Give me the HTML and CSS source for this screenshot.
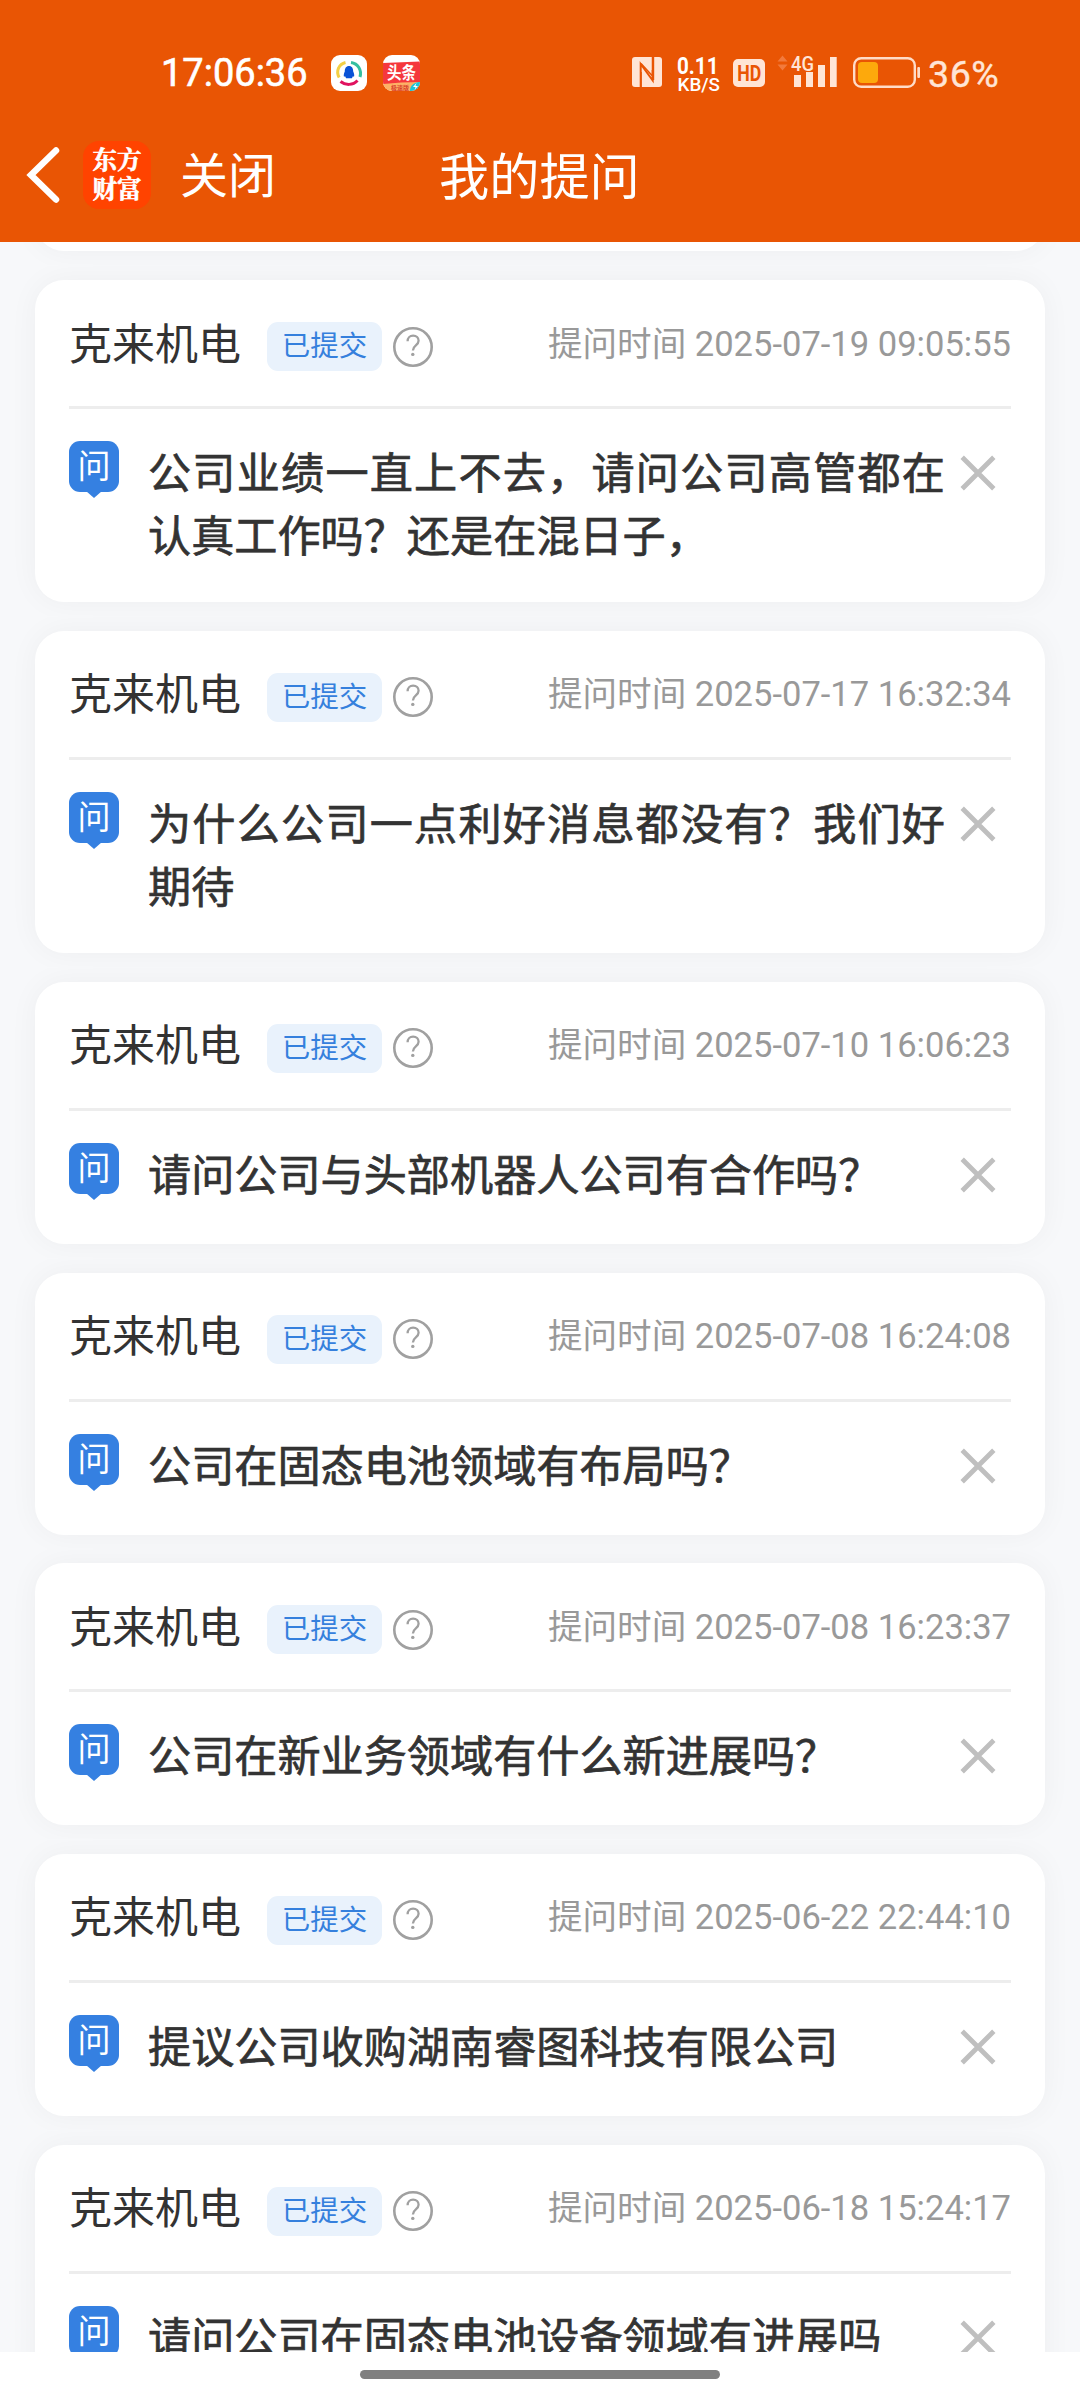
FILE: index.html
```html
<!DOCTYPE html>
<html lang="zh-CN">
<head>
<meta charset="utf-8">
<title>我的提问</title>
<link rel="stylesheet" href="styles.css">
</head>
<body>
<svg class="defs" aria-hidden="true">
  <symbol id="help" viewBox="0 0 42 42"><circle cx="21" cy="21" r="18.7" fill="none" stroke="#a0a0a0" stroke-width="2.6"/><path d="M15.6 15.300c0-3.400 2.200-5.600 5.500-5.600s5.500 2.100 5.500 5.100c0 4.600-5.700 4.600-5.700 9.600" fill="none" stroke="#a0a0a0" stroke-width="2.3"/><circle cx="20.8" cy="28.400" r="1.7" fill="#a0a0a0"/></symbol>
  <symbol id="close" viewBox="0 0 36 36"><path d="M2.2 2.2l31.6 31.6M33.8 2.2L2.2 33.8" fill="none" stroke="#bfbfbf" stroke-width="4.8"/></symbol>
</svg>
<header class="header">
  <div class="status">
    <span class="clock">17:06:36</span>
    <svg class="app" width="36" height="36" viewBox="0 0 36 36">
      <rect width="36" height="36" rx="9" fill="#fff"/>
      <g fill="none" stroke-width="3"><path d="M8.200 22.500C4.500 16 8 9 14.500 7.500" stroke="#f3cf45"/><path d="M20 7.500C27 8.500 31 15 29 22" stroke="#35bfa0"/><path d="M9.500 26.500C14.500 30.500 22 30.500 26.500 25.500" stroke="#e0125f"/></g>
      <path d="M18 11c3 0 4.200 2.400 4.200 5.500 1 2 1.300 4 .8 5.300l-1.100-.5-1 2h-5.800l-1-2-1.100.5c-.5-1.300-.2-3.300.8-5.300C13.800 13.400 15 11 18 11z" fill="#0a52d6"/>
    </svg>
    <svg class="app" width="37" height="36" viewBox="0 0 37 36">
      <clipPath id="newsclip"><rect width="37" height="36" rx="9"/></clipPath>
      <g clip-path="url(#newsclip)"><rect width="37" height="36" fill="#fff"/><path d="M0 8l37-1.500V29H0z" fill="#f5383d"/><path d="M0 29q18-2 37-2v9H0z" fill="#fdb266"/><path d="M27 36c0-6 4-8.500 10-9v9z" fill="#19c5dc"/><path d="M33.500 28l-3.500 4h2.500l-1 3 3.500-4h-2.500z" fill="#fff"/>
      <text class="news" x="4" y="24" textLength="29" lengthAdjust="spacingAndGlyphs">头条</text><text class="news-sub" x="17" y="34.500" text-anchor="middle">极速版</text></g>
    </svg>
    <svg class="signals" width="290" height="44" viewBox="630 51 290 44">
      <rect x="632" y="57" width="30" height="30" rx="3" fill="#ffe5d6"/>
      <path d="M640.700 87V64l12 16.500V70M653.200 57v23" fill="none" stroke="#e95504" stroke-width="2"/><path d="M641 63.500l11.500 12.500v-5l0-14M641 72v15" fill="none" stroke="#e95504" stroke-width="1.500"/>
      <text class="speed" x="677" y="73.500" textLength="41.500" lengthAdjust="spacingAndGlyphs">0.11</text>
      <text class="unit" x="677.500" y="91" textLength="42.500" lengthAdjust="spacingAndGlyphs">KB/S</text>
      <rect x="733" y="59" width="32" height="28" rx="5" fill="#ffe5d6"/>
      <text class="hd" x="749.200" y="81" text-anchor="middle" textLength="24" lengthAdjust="spacingAndGlyphs">HD</text>
      <path d="M777.500 61.500l5-6 5 6zM777.500 64.500l5 6 5-6z" fill="#f27a3c"/>
      <text class="net" x="791" y="70.500" textLength="23" lengthAdjust="spacingAndGlyphs">4G</text>
      <path d="M794 75h7v12h-7zM806 72h7v15h-7zM818 65h7v22h-7zM830 57h6.700v30h-6.700z" fill="#ffe5d6"/>
      <rect x="854.200" y="58.200" width="60.600" height="28.600" rx="7" fill="none" stroke="#ffdcc8" stroke-width="2.400"/>
      <rect x="858" y="62" width="20" height="21" rx="4" fill="#fda90c"/><rect x="917.300" y="67" width="2.700" height="11" rx="1" fill="#ffdcc8"/>
    </svg>
    <span class="percent">36%</span>
  </div>
  <nav class="nav">
    <svg class="back" width="34" height="60" viewBox="0 0 34 60"><path d="M30 5.500L5 30 30 54.500" fill="none" stroke="#fff" stroke-width="6.500" stroke-linecap="round" stroke-linejoin="miter"/></svg>
    <div class="logo"><span>东方</span><span>财富</span></div>
    <span class="exit">关闭</span>
    <h1 class="title">我的提问</h1>
  </nav>
</header>
<main class="list">
  <article class="card previous"></article>
  <article class="card two-line">
    <div class="head"><span class="name">克来机电</span><span class="tag">已提交</span><svg class="help"><use href="#help"/></svg><time class="time">提问时间 2025-07-19 09:05:55</time></div>
    <div class="body"><span class="ask">问</span><p class="question">公司业绩一直上不去，请问公司高管都在认真工作吗？还是在混日子，</p><svg class="close"><use href="#close"/></svg></div>
  </article>
  <article class="card two-line">
    <div class="head"><span class="name">克来机电</span><span class="tag">已提交</span><svg class="help"><use href="#help"/></svg><time class="time">提问时间 2025-07-17 16:32:34</time></div>
    <div class="body"><span class="ask">问</span><p class="question">为什么公司一点利好消息都没有？我们好期待</p><svg class="close"><use href="#close"/></svg></div>
  </article>
  <article class="card">
    <div class="head"><span class="name">克来机电</span><span class="tag">已提交</span><svg class="help"><use href="#help"/></svg><time class="time">提问时间 2025-07-10 16:06:23</time></div>
    <div class="body"><span class="ask">问</span><p class="question">请问公司与头部机器人公司有合作吗？</p><svg class="close"><use href="#close"/></svg></div>
  </article>
  <article class="card">
    <div class="head"><span class="name">克来机电</span><span class="tag">已提交</span><svg class="help"><use href="#help"/></svg><time class="time">提问时间 2025-07-08 16:24:08</time></div>
    <div class="body"><span class="ask">问</span><p class="question">公司在固态电池领域有布局吗？</p><svg class="close"><use href="#close"/></svg></div>
  </article>
  <article class="card">
    <div class="head"><span class="name">克来机电</span><span class="tag">已提交</span><svg class="help"><use href="#help"/></svg><time class="time">提问时间 2025-07-08 16:23:37</time></div>
    <div class="body"><span class="ask">问</span><p class="question">公司在新业务领域有什么新进展吗？</p><svg class="close"><use href="#close"/></svg></div>
  </article>
  <article class="card">
    <div class="head"><span class="name">克来机电</span><span class="tag">已提交</span><svg class="help"><use href="#help"/></svg><time class="time">提问时间 2025-06-22 22:44:10</time></div>
    <div class="body"><span class="ask">问</span><p class="question">提议公司收购湖南睿图科技有限公司</p><svg class="close"><use href="#close"/></svg></div>
  </article>
  <article class="card">
    <div class="head"><span class="name">克来机电</span><span class="tag">已提交</span><svg class="help"><use href="#help"/></svg><time class="time">提问时间 2025-06-18 15:24:17</time></div>
    <div class="body"><span class="ask">问</span><p class="question">请问公司在固态电池设备领域有进展吗</p><svg class="close"><use href="#close"/></svg></div>
  </article>
</main>
<footer class="gesture"><div class="pill"></div></footer>
</body>
</html>
```
FILE: styles.css
```css
* { box-sizing: border-box; }
body { margin: 0; width: 1080px; height: 2400px; overflow: hidden; display: flex; flex-direction: column; background: #fff; font-family: Roboto, "Noto Sans CJK SC", sans-serif; }
.defs { display: none; }
svg { display: block; flex: none; }

.header { flex: none; height: 242px; background: #e95504; color: #fff; }
.status { height: 107px; padding: 39px 0 0 161px; display: flex; align-items: center; }
.clock { width: 170px; font-size: 38px; font-weight: 400; line-height: 68px; white-space: nowrap; -webkit-text-stroke: .6px currentColor; }
.app { margin-right: 16px; }
.signals { margin-left: 194px; }
.percent { margin-left: 8px; padding-top: 1px; font-size: 37.500px; line-height: 68px; color: #ffe5d6; letter-spacing: .6px; -webkit-text-stroke: .4px currentColor; }
.news { font: bold 17px "Noto Sans CJK SC", sans-serif; fill: #fff; }
.news-sub { font: bold 6px "Noto Sans CJK SC", sans-serif; fill: #d9402b; }
.speed { font: 700 24px Roboto, sans-serif; fill: #fff; }
.unit { font: 500 18px Roboto, sans-serif; fill: #fff; }
.hd { font: 700 22px Roboto, sans-serif; fill: #e95504; }
.net { font: 500 21px Roboto, sans-serif; fill: #ffe5d6; }

.nav { height: 135px; display: grid; grid-template-columns: 57px 97px 259px auto; padding-left: 26px; align-items: center; }
.logo { width: 68px; height: 68px; border-radius: 16px; background: #ff4300; display: flex; flex-direction: column; align-items: center; justify-content: center; font: 700 24.500px/29px "Noto Serif CJK SC", "Noto Sans CJK SC", sans-serif; -webkit-text-stroke: .6px currentColor; }
.logo span { position: relative; top: -1.500px; }
.exit { font-size: 48px; line-height: 68px; padding-top: 4px; }
.title { margin: 0; font-size: 50.200px; font-weight: 400; line-height: 68px; padding-top: 6px; }

.list { flex: none; height: 2110px; overflow: hidden; background: #f7f8fa; padding: 0 35px; display: flex; flex-direction: column; gap: 28.700px; }
.card { position: relative; flex: none; height: 261.970px; padding: 0 34px; border-radius: 29px; background: #fff; box-shadow: 0 0 30px rgba(0, 0, 0, .045); clip-path: inset(-14.350px -35px); }
.card.two-line { height: 322.300px; }
.card.previous { height: 80px; margin-top: -70.700px; }
.head { height: 129px; border-bottom: 3px solid #ededed; display: flex; align-items: center; }
.name { width: 198px; padding-top: 3px; font-size: 43px; line-height: 60px; color: #333; }
.tag { width: 115px; height: 49px; margin-top: 7px; border-radius: 11px; background: #e9f2fc; color: #3580dd; font-size: 28.500px; line-height: 49px; text-align: center; }
.help { width: 42px; height: 42px; margin: 7px 0 0 10px; }
.time { margin-left: auto; padding-top: 1px; font-size: 34.550px; line-height: 48px; color: #999; white-space: nowrap; }
.body { display: flex; padding-top: 32px; }
.ask { position: relative; flex: none; width: 50px; height: 51px; border-radius: 11px; background: #3580e1; color: #fff; font-size: 33px; line-height: 51px; text-align: center; }
.ask::after { content: ""; position: absolute; left: 17px; top: 50px; border: solid transparent; border-width: 7px 8px 0; border-top-color: #3580e1; }
.question { width: 797px; margin: 2px 0 0 29px; font-size: 43.150px; font-weight: 400; -webkit-text-stroke: .7px currentColor; line-height: 63.300px; color: #333; text-align: justify; }
.close { width: 36px; height: 36px; margin: 14px 0 0 15px; }

.gesture { flex: 1; padding-top: 18px; background: #fff; }
.pill { width: 360px; height: 9px; margin: 0 auto; border-radius: 5px; background: #808080; }
```
